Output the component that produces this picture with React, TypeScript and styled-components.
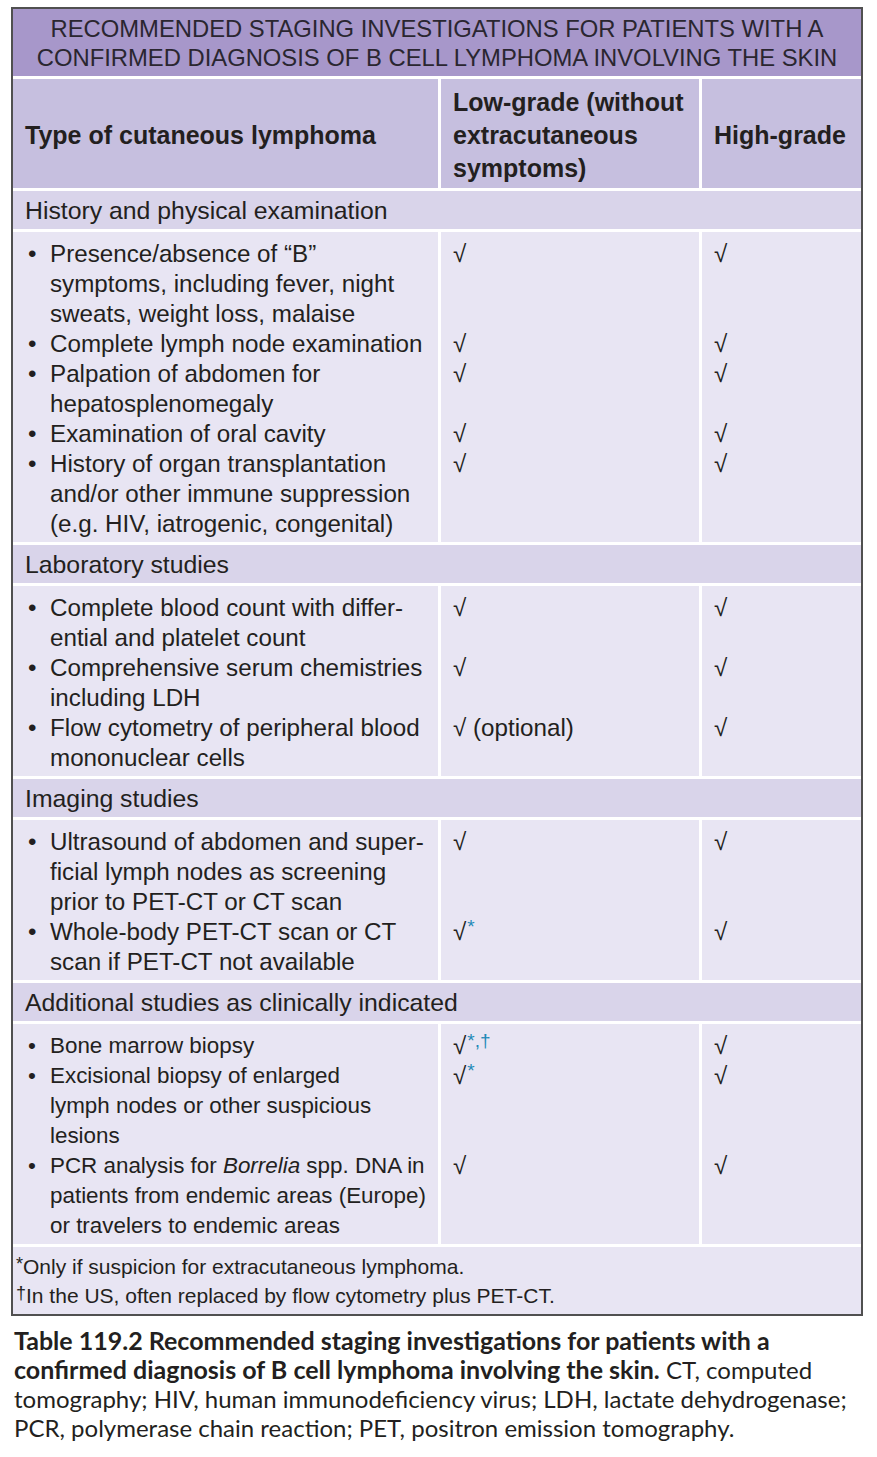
import React from 'react';
import styled, { createGlobalStyle } from 'styled-components';

const GlobalStyle = createGlobalStyle`
  html, body {
    margin: 0;
    padding: 0;
    background: #ffffff;
  }
  body {
    font-family: "Liberation Sans", Arial, sans-serif;
    color: #231f20;
  }
`;

const COLS = '425px 258px 1fr';

const Page = styled.div`
  width: 852px;
  padding: 7px 0 0 11px;
`;

const Table = styled.div`
  display: flex;
  flex-direction: column;
  gap: 3px;
  background: #ffffff;
  border: 2px solid #505050;
`;

const Title = styled.div`
  background: #a797ca;
  text-align: center;
  font-size: 23.8px;
  line-height: 29px;
  padding: 5px 0 4px;
  color: #2a2630;
  text-transform: uppercase;
  white-space: nowrap;
`;

const HeadGrid = styled.div`
  display: grid;
  grid-template-columns: ${COLS};
  column-gap: 3px;
`;

const HeadCell = styled.div`
  background: #c6bfdf;
  font-weight: bold;
  font-size: 25px;
  line-height: 33px;
  padding: 7px 4px 3px 12px;
  display: flex;
  align-items: center;
`;

const SectionRow = styled.div`
  background: #d9d4ea;
  font-size: 24.8px;
  line-height: 30px;
  padding: 5px 12px 3px;
`;

const BodyGrid = styled.div<{ $narrow?: boolean }>`
  display: grid;
  grid-template-columns: ${COLS};
  column-gap: 3px;
  font-size: ${(p) => (p.$narrow ? 22.4 : 24.2)}px;
  line-height: 30px;
`;

const ItemCell = styled.div<{ $first?: boolean; $last?: boolean }>`
  background: #e8e5f3;
  display: flex;
  padding: ${(p) => (p.$first ? 7 : 0)}px 4px ${(p) => (p.$last ? 3 : 0)}px 12px;
`;

const Bullet = styled.span`
  flex: 0 0 25px;
  padding-left: 3px;
  box-sizing: border-box;
`;

const CheckCell = styled.div<{ $first?: boolean; $last?: boolean }>`
  background: #e8e5f3;
  font-size: 24.2px;
  padding: ${(p) => (p.$first ? 7 : 0)}px 11px ${(p) => (p.$last ? 3 : 0)}px 12px;
`;

const Mark = styled.sup`
  color: #1f8ab8;
  font-size: 19px;
  line-height: 0;
  vertical-align: 7px;
  margin-left: 1px;
`;

const Footnotes = styled.div`
  background: #e8e5f3;
  padding: 5px 12px 4px 3px;
  font-size: 21px;
  line-height: 29px;
`;

const Sym = styled.sup`
  font-size: 18px;
  line-height: 0;
  vertical-align: 4px;
`;

const Caption = styled.p`
  margin: 10px 0 0 3px;
  font-family: Lato, "Open Sans", sans-serif;
  font-size: 24px;
  line-height: 29px;
  color: #231f20;
  white-space: nowrap;

  b {
    font-size: 25px;
  }
`;

type Check = React.ReactNode;
type Item = { text: React.ReactNode; low: Check; high: Check };
type Section = { title: string; narrow?: boolean; items: Item[] };

const tick = '\u221A';

const sections: Section[] = [
  {
    title: 'History and physical examination',
    items: [
      {
        text: <>Presence/absence of “B” symptoms, including fever, night sweats, weight loss, malaise</>,
        low: tick,
        high: tick,
      },
      { text: 'Complete lymph node examination', low: tick, high: tick },
      { text: 'Palpation of abdomen for hepatosplenomegaly', low: tick, high: tick },
      { text: 'Examination of oral cavity', low: tick, high: tick },
      {
        text: 'History of organ transplantation and/or other immune suppression (e.g. HIV, iatrogenic, congenital)',
        low: tick,
        high: tick,
      },
    ],
  },
  {
    title: 'Laboratory studies',
    items: [
      {
        text: <>Complete blood count with differ-<br />ential and platelet count</>,
        low: tick,
        high: tick,
      },
      { text: 'Comprehensive serum chemistries including LDH', low: tick, high: tick },
      {
        text: 'Flow cytometry of peripheral blood mononuclear cells',
        low: `${tick} (optional)`,
        high: tick,
      },
    ],
  },
  {
    title: 'Imaging studies',
    items: [
      {
        text: <>Ultrasound of abdomen and super-<br />ficial lymph nodes as screening prior to PET-CT or CT scan</>,
        low: tick,
        high: tick,
      },
      {
        text: 'Whole-body PET-CT scan or CT scan if PET-CT not available',
        low: <>{tick}<Mark>*</Mark></>,
        high: tick,
      },
    ],
  },
  {
    title: 'Additional studies as clinically indicated',
    narrow: true,
    items: [
      { text: 'Bone marrow biopsy', low: <>{tick}<Mark>*,†</Mark></>, high: tick },
      {
        text: <>Excisional biopsy of enlarged<br />lymph nodes or other suspicious<br />lesions</>,
        low: <>{tick}<Mark>*</Mark></>,
        high: tick,
      },
      {
        text: (
          <>
            PCR analysis for <i>Borrelia</i> spp. DNA in<br />
            patients from endemic areas (Europe)<br />
            or travelers to endemic areas
          </>
        ),
        low: tick,
        high: tick,
      },
    ],
  },
];

function SectionBlock({ section }: { section: Section }) {
  const n = section.items.length;
  return (
    <>
      <SectionRow>{section.title}</SectionRow>
      <BodyGrid $narrow={section.narrow}>
        {section.items.map((item, i) => (
          <React.Fragment key={i}>
            <ItemCell $first={i === 0} $last={i === n - 1}>
              <Bullet>•</Bullet>
              <span>{item.text}</span>
            </ItemCell>
            <CheckCell $first={i === 0} $last={i === n - 1}>{item.low}</CheckCell>
            <CheckCell $first={i === 0} $last={i === n - 1}>{item.high}</CheckCell>
          </React.Fragment>
        ))}
      </BodyGrid>
    </>
  );
}

export default function App() {
  return (
    <Page>
      <GlobalStyle />
      <Table>
        <Title>
          Recommended staging investigations for patients with a<br />
          confirmed diagnosis of B cell lymphoma involving the skin
        </Title>
        <HeadGrid>
          <HeadCell>Type of cutaneous lymphoma</HeadCell>
          <HeadCell>Low-grade (without extracutaneous symptoms)</HeadCell>
          <HeadCell>High-grade</HeadCell>
        </HeadGrid>
        {sections.map((s) => (
          <SectionBlock key={s.title} section={s} />
        ))}
        <Footnotes>
          <Sym>*</Sym>Only if suspicion for extracutaneous lymphoma.
          <br />
          <Sym>†</Sym>In the US, often replaced by flow cytometry plus PET-CT.
        </Footnotes>
      </Table>
      <Caption>
        <b>Table 119.2 Recommended staging investigations for patients with a</b>
        <br />
        <b>confirmed diagnosis of B cell lymphoma involving the skin.</b> CT, computed
        <br />
        tomography; HIV, human immunodeficiency virus; LDH, lactate dehydrogenase;
        <br />
        PCR, polymerase chain reaction; PET, positron emission tomography.
      </Caption>
    </Page>
  );
}
